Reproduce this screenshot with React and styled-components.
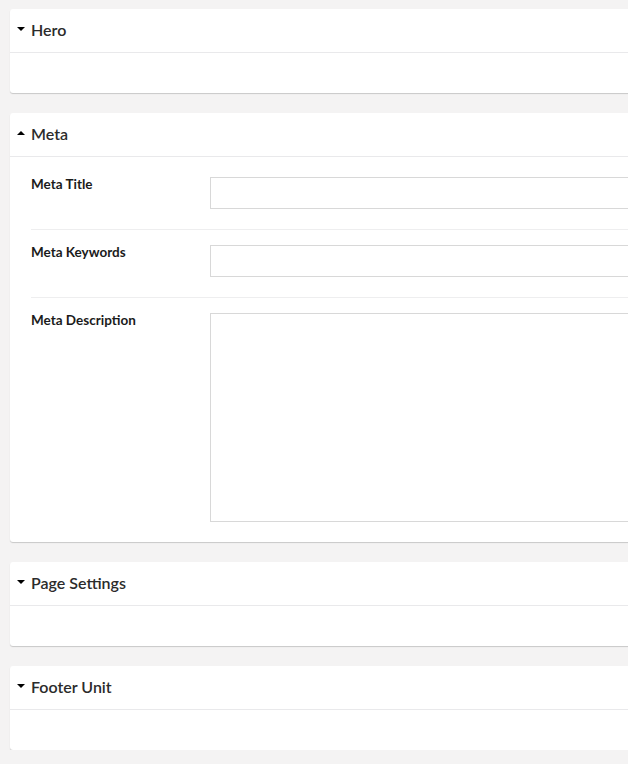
import React from "react";
import styled, { createGlobalStyle } from "styled-components";

const Global = createGlobalStyle`
  html, body { margin: 0; background: #f4f3f3; overflow: hidden; }
  body { font-family: Lato, "Open Sans", sans-serif; color: #1b264f; }
`;

const Page = styled.div`
  display: flex;
  flex-direction: column;
  gap: 20px;
  padding: 9px 0 0 10px;
  width: 680px;
`;

const Card = styled.div`
  background: #fff;
  border-radius: 3px;
  box-shadow: 0 1px 1px rgba(0, 0, 0, 0.18);
`;

const Header = styled.div`
  display: flex;
  align-items: center;
  gap: 6px;
  height: 44px;
  box-sizing: border-box;
  padding: 0 0 3px 7px;
  border-bottom: 1px solid #e9e9eb;
  font-size: 16px;
  font-weight: 600;
  color: #2b2b2b;
`;

const Caret = styled.span`
  width: 0;
  height: 0;
  border-left: 4px solid transparent;
  border-right: 4px solid transparent;
  ${({ open }) =>
    open ? "border-bottom: 4px solid #000;" : "border-top: 4px solid #000;"}
`;

const Body = styled.div`
  min-height: 40px;
  padding: ${({ padded }) => (padded ? "20px 0 0 21px" : "0")};
`;

const Row = styled.div`
  display: grid;
  grid-template-columns: 179px 1fr;
  padding: 0 0 20px;
  & + & {
    border-top: 1px solid #eeeeef;
    padding-top: 15px;
  }
`;

const Label = styled.div`
  font-size: 13.5px;
  font-weight: 700;
  color: #1b1b1b;
  margin-top: -1px;
`;

const Input = styled.div`
  height: 30px;
  border: 1px solid #d8d8d8;
  border-right: none;
`;

const TextArea = styled(Input)`
  height: 207px;
`;

const Section = ({ title, open, children }) => (
  <Card>
    <Header>
      <Caret open={open} />
      {title}
    </Header>
    <Body padded={!!children}>{children}</Body>
  </Card>
);

export default function App() {
  return (
    <>
      <Global />
      <Page>
        <Section title="Hero" />
        <Section title="Meta" open>
          <Row>
            <Label>Meta Title</Label>
            <Input />
          </Row>
          <Row>
            <Label>Meta Keywords</Label>
            <Input />
          </Row>
          <Row>
            <Label>Meta Description</Label>
            <TextArea />
          </Row>
        </Section>
        <Section title="Page Settings" />
        <Section title="Footer Unit" />
      </Page>
    </>
  );
}
